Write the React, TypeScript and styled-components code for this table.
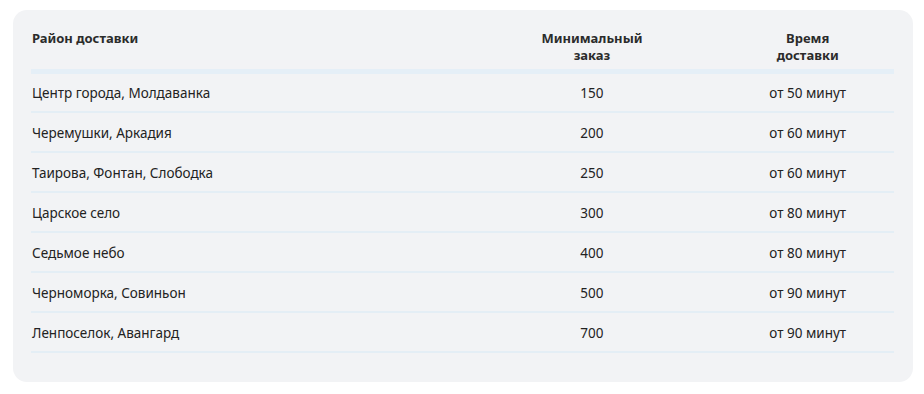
import React from "react";
import styled, { createGlobalStyle } from "styled-components";

const GlobalStyle = createGlobalStyle`
  html, body { margin: 0; padding: 0; background: #ffffff; }
  body { font-family: "Noto Sans", "Open Sans", sans-serif; color: #222; }
`;

const Page = styled.div`
  padding: 10px 11px 11px 13px;
`;

const Card = styled.section`
  width: 900px;
  box-sizing: border-box;
  background: #f2f3f5;
  border-radius: 14px;
  padding: 20px 19px 29px 18px;
`;

const Table = styled.table`
  width: 100%;
  border-collapse: collapse;
  table-layout: fixed;
`;

const Col = styled.col<{ $w: string }>`
  width: ${(p) => p.$w};
`;

const HeadCell = styled.th<{ $align: "left" | "center" }>`
  text-align: ${(p) => p.$align};
  vertical-align: top;
  font-size: 13px;
  font-weight: 700;
  line-height: 17px;
  color: #2b2b2b;
  padding: 0 0 5px ${(p) => (p.$align === "left" ? "1px" : "0")};
  border-bottom: 5px solid #e5eff7;
`;

const Row = styled.tr`
  border-bottom: 2px solid #e4eef5;
`;

const Cell = styled.td<{ $align: "left" | "center" }>`
  text-align: ${(p) => p.$align};
  height: 40px;
  padding: 2px 0 0 ${(p) => (p.$align === "left" ? "1px" : "0")};
  box-sizing: border-box;
  font-size: 13.5px;
  line-height: 18px;
  color: #222;
  vertical-align: middle;
`;

const rows = [
  ["Центр города, Молдаванка", "150", "от 50 минут"],
  ["Черемушки, Аркадия", "200", "от 60 минут"],
  ["Таирова, Фонтан, Слободка", "250", "от 60 минут"],
  ["Царское село", "300", "от 80 минут"],
  ["Седьмое небо", "400", "от 80 минут"],
  ["Черноморка, Совиньон", "500", "от 90 минут"],
  ["Ленпоселок, Авангард", "700", "от 90 минут"],
];

export default function App() {
  return (
    <>
      <GlobalStyle />
      <Page>
        <Card>
          <Table>
            <colgroup>
              <Col $w="50%" />
              <Col $w="30%" />
              <Col $w="20%" />
            </colgroup>
            <thead>
              <tr>
                <HeadCell $align="left">Район доставки</HeadCell>
                <HeadCell $align="center">
                  Минимальный
                  <br />
                  заказ
                </HeadCell>
                <HeadCell $align="center">
                  Время
                  <br />
                  доставки
                </HeadCell>
              </tr>
            </thead>
            <tbody>
              {rows.map((r) => (
                <Row key={r[0]}>
                  <Cell $align="left">{r[0]}</Cell>
                  <Cell $align="center">{r[1]}</Cell>
                  <Cell $align="center">{r[2]}</Cell>
                </Row>
              ))}
            </tbody>
          </Table>
        </Card>
      </Page>
    </>
  );
}
